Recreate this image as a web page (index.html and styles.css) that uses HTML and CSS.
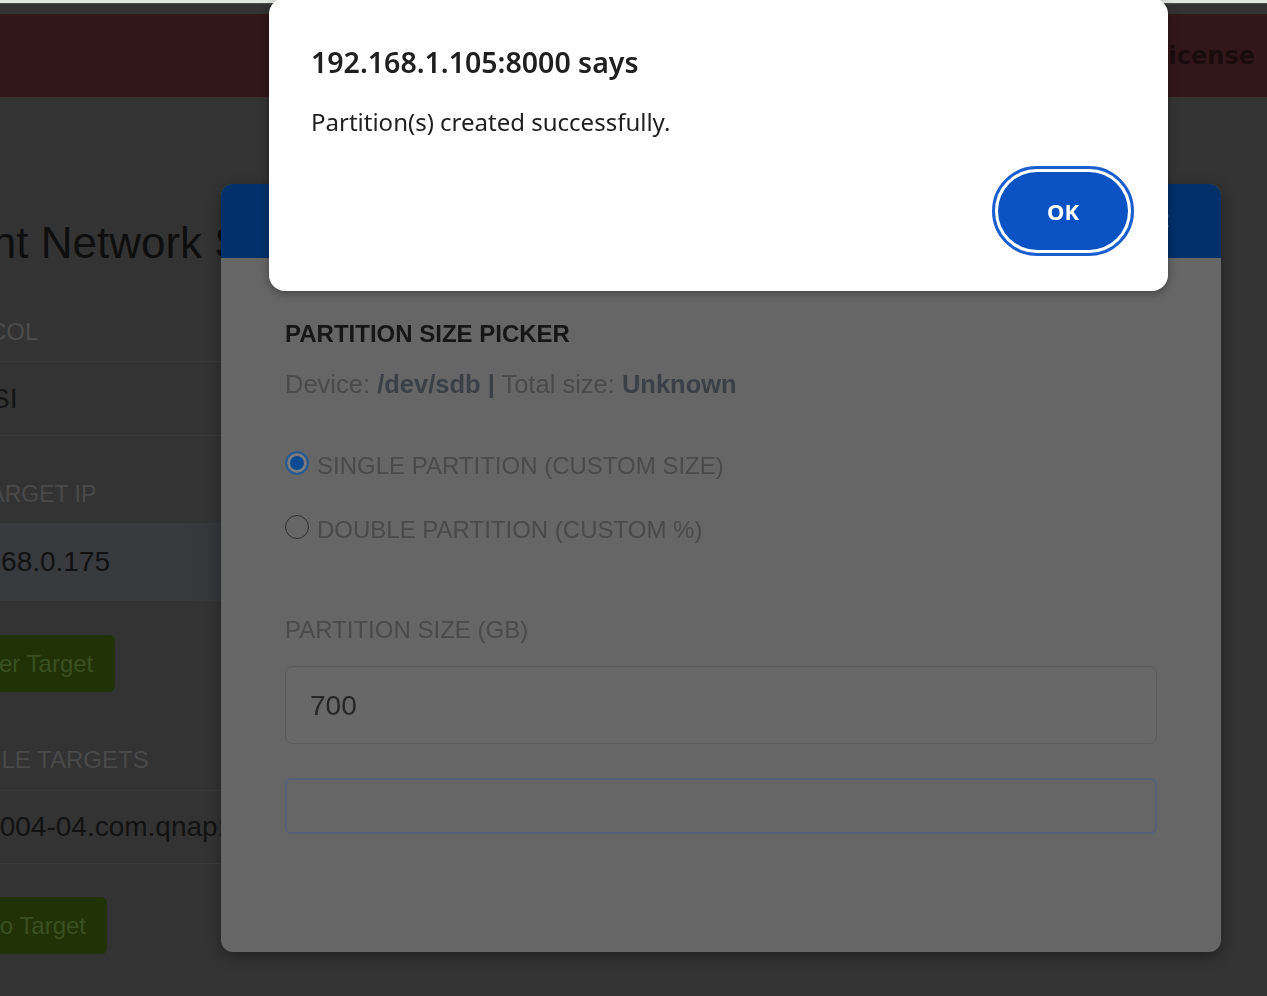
FILE: index.html
```html
<!DOCTYPE html>
<html lang="en">
<head>
  <meta charset="UTF-8">
  <meta name="viewport" content="width=device-width, initial-scale=1.0">
  <title>Client Network Storage</title>
  <link rel="stylesheet" href="styles.css">
</head>
<body>
  <div class="browser-edge"></div>

  <!-- Barra superior -->
  <header class="topbar">
    <a href="#" class="topbar-link">License</a>
  </header>

  <!-- Contenido de la pagina (detras del modal) -->
  <main class="page">
    <h1 class="page-title">Client Network Storage</h1>

    <div class="table-head">PROTOCOL</div>
    <div class="table-row">iSCSI</div>

    <div class="field-label">TARGET IP</div>
    <div class="field-value">192.168.0.175</div>
    <button class="btn-green btn-discover">Discover Target</button>

    <div class="field-label field-label-targets">AVAILABLE TARGETS</div>
    <div class="target-row">iqn.2004-04.com.qnap:ts-453d:iscsi.target01</div>
    <button class="btn-green btn-connect">Connect to Target</button>
  </main>

  <!-- Modal de particiones -->
  <div class="modal">
    <div class="modal-header">
      <span class="modal-close">&times;</span>
    </div>
    <div class="modal-body">
      <h3 class="picker-title">PARTITION SIZE PICKER</h3>
      <p class="device-info">Device: <b>/dev/sdb</b> <b>|</b> Total size: <b>Unknown</b></p>

      <label class="radio-option">
        <span class="radio checked"></span>
        SINGLE PARTITION (CUSTOM SIZE)
      </label>
      <label class="radio-option radio-second">
        <span class="radio"></span>
        DOUBLE PARTITION (CUSTOM %)
      </label>

      <div class="size-label">PARTITION SIZE (GB)</div>
      <div class="size-input">700</div>
      <div class="size-input size-input-focus"></div>
    </div>
  </div>

  <!-- Alerta del navegador -->
  <div class="alert-dialog">
    <div class="alert-title">192.168.1.105:8000 says</div>
    <div class="alert-message">Partition(s) created successfully.</div>
    <div class="alert-actions">
      <button class="alert-ok">OK</button>
    </div>
  </div>
</body>
</html>
```

FILE: styles.css
```css
/* Estilos generales */
body {
  font-family: "Liberation Sans", Arial, sans-serif;
  margin: 0;
  padding: 0;
  background-color: #333333;
  width: 1267px;
  height: 996px;
  overflow: hidden;
}

.browser-edge {
  height: 3px;
  background-color: #e4e6e0;
  border-bottom: 1px solid #4a5146;
}

/* Barra superior */
.topbar {
  margin-top: 10px;
  height: 83px;
  background-color: #31171a;
  display: flex;
  align-items: center;
  justify-content: flex-end;
  padding-right: 12px;
}

.topbar-link {
  font-family: "DejaVu Sans", sans-serif;
  font-weight: bold;
  font-size: 24px;
  color: #1c0b0d;
  text-decoration: none;
}

/* Pagina */
.page {
  width: 221px;
  overflow: hidden;
  white-space: nowrap;
}

.page-title {
  margin: 116px 0 0 -84px;
  height: 60px;
  line-height: 60px;
  font-size: 44px;
  font-weight: normal;
  color: #0e0e0e;
}

.table-head {
  height: 58px;
  line-height: 58px;
  margin-top: 30px;
  font-size: 24px;
  color: #4c4c4c;
  text-indent: -96px;
  border-bottom: 1px solid #3a3a3a;
}

.table-row {
  height: 73px;
  line-height: 73px;
  font-size: 28px;
  color: #141414;
  text-indent: -54px;
  border-bottom: 1px solid #3a3a3a;
}

.field-label {
  margin-top: 40px;
  height: 36px;
  line-height: 36px;
  font-size: 23px;
  color: #4a4a4a;
  text-indent: -23px;
}

.field-value {
  margin-top: 11px;
  height: 78px;
  line-height: 78px;
  font-size: 28px;
  color: #111111;
  text-indent: -69px;
  background: linear-gradient(to right, #393a3e 80%, #353639);
}

/* Botones verdes */
.btn-green {
  display: block;
  height: 57px;
  border: none;
  border-radius: 6px;
  background-color: #213206;
  color: #3a5021;
  font-family: "Liberation Sans", Arial, sans-serif;
  font-size: 24px;
  padding: 0 22px;
  white-space: nowrap;
}

.btn-discover {
  margin: 34px 0 0 -95px;
}

.btn-connect {
  margin: 33px 0 0 -124px;
  padding: 0 21px;
}

.field-label-targets {
  margin-top: 50px;
  font-size: 24px;
  text-indent: -95px;
}

.target-row {
  margin-top: 12px;
  height: 72px;
  line-height: 72px;
  font-size: 28px;
  color: #121212;
  text-indent: -61px;
  border-top: 1px solid #3a3a3a;
  border-bottom: 1px solid #3a3a3a;
}

/* Modal */
.modal {
  position: fixed;
  left: 221px;
  top: 184px;
  width: 1000px;
  height: 768px;
  background-color: #666666;
  border-radius: 12px;
  overflow: hidden;
  box-shadow: 0 4px 14px rgba(0, 0, 0, 0.35);
}

.modal-header {
  height: 74px;
  background-color: #03306a;
  display: flex;
  align-items: center;
  justify-content: flex-end;
  padding-right: 50px;
}

.modal-close {
  font-size: 30px;
  color: #5d6e88;
}

.modal-body {
  padding: 62px 64px 0 64px;
}

.picker-title {
  margin: 0;
  line-height: 28px;
  font-size: 24px;
  color: #161616;
}

.device-info {
  margin: 21px 0 0 0;
  line-height: 30px;
  font-size: 25.5px;
  color: #4a4a4a;
}

.device-info b {
  color: #3b4047;
}

.radio-option {
  display: flex;
  align-items: center;
  gap: 8px;
  margin-top: 51px;
  line-height: 32px;
  font-size: 24px;
  color: #4a4a4a;
}

.radio-second {
  margin-top: 32px;
}

.radio {
  width: 24px;
  height: 24px;
  border-radius: 50%;
  border: 1.5px solid #2f2f2f;
  box-sizing: border-box;
  margin-top: -6px;
}

.radio.checked {
  border: 2px solid #2a5a92;
  background-color: #0c4a92;
  box-shadow: inset 0 0 0 3px #7c7c7c;
}

.size-label {
  margin-top: 70px;
  line-height: 28px;
  font-size: 24px;
  color: #4a4a4a;
}

.size-input {
  margin-top: 22px;
  height: 78px;
  line-height: 78px;
  border: 1px solid #5c5c5c;
  border-radius: 8px;
  box-sizing: border-box;
  padding-left: 24px;
  font-size: 28px;
  color: #262626;
  background-color: #686868;
}

.size-input-focus {
  margin-top: 34px;
  height: 56px;
  border: 2px solid #56607a;
  border-radius: 6px;
  background-color: #666666;
}

/* Alerta */
.alert-dialog {
  position: fixed;
  left: 269px;
  top: -2px;
  width: 899px;
  height: 293px;
  box-sizing: border-box;
  padding: 42px 40px 0 42px;
  background-color: #ffffff;
  border-radius: 16px;
  box-shadow: 0 2px 10px rgba(0, 0, 0, 0.35);
  font-family: "Noto Sans", "Open Sans", sans-serif;
}

.alert-title {
  font-size: 28.5px;
  font-weight: 600;
  color: #1f1f1f;
  line-height: 44px;
}

.alert-message {
  margin-top: 22px;
  font-size: 24px;
  color: #1f1f1f;
  line-height: 32px;
}

.alert-actions {
  display: flex;
  justify-content: flex-end;
  margin-top: 34px;
}

.alert-ok {
  width: 130px;
  height: 78px;
  border: none;
  border-radius: 39px;
  background-color: #0b52c4;
  color: #ffffff;
  font-family: "Noto Sans", "Open Sans", sans-serif;
  font-weight: bold;
  font-size: 22px;
  outline: 3px solid #1a5fd0;
  outline-offset: 3px;
}
```
